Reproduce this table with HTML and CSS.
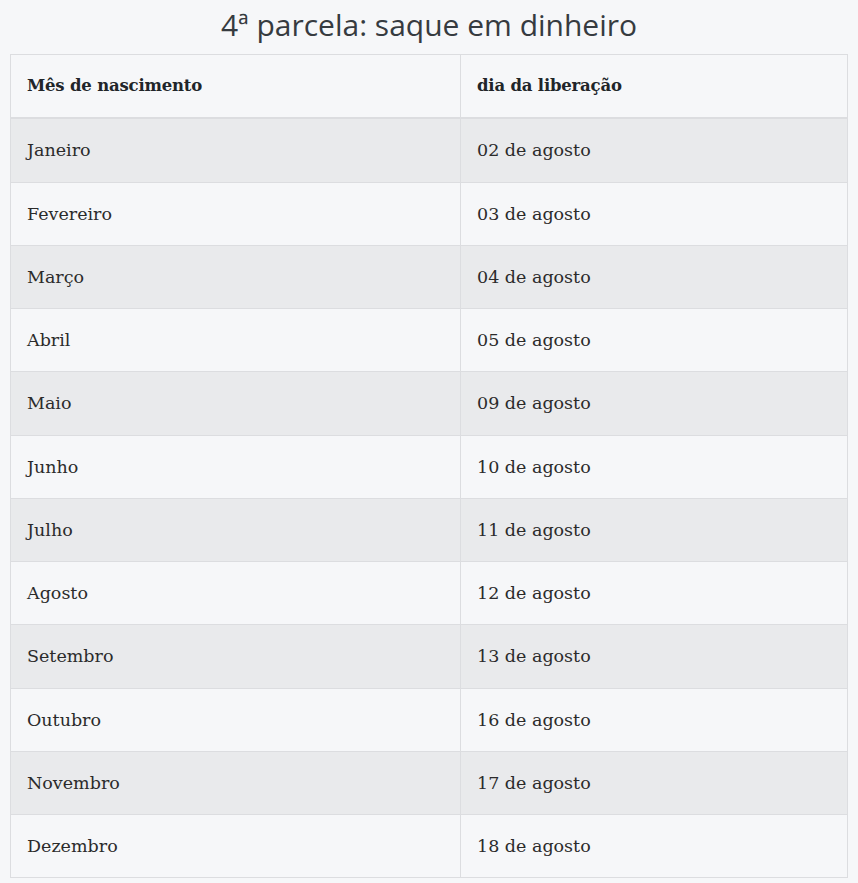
FILE: index.html
```html
<!DOCTYPE html>
<html lang="pt-BR">
<head>
<meta charset="utf-8">
<title>4ª parcela: saque em dinheiro</title>
<link rel="stylesheet" href="styles.css">
</head>
<body>
<div class="page">
  <h2 class="title">4ª parcela: saque em dinheiro</h2>
  <table class="schedule">
    <colgroup>
      <col class="col-month">
      <col class="col-date">
    </colgroup>
    <thead>
      <tr><th>Mês de nascimento</th><th>dia da liberação</th></tr>
    </thead>
    <tbody>
      <tr><td>Janeiro</td><td>02 de agosto</td></tr>
      <tr><td>Fevereiro</td><td>03 de agosto</td></tr>
      <tr><td>Março</td><td>04 de agosto</td></tr>
      <tr><td>Abril</td><td>05 de agosto</td></tr>
      <tr><td>Maio</td><td>09 de agosto</td></tr>
      <tr><td>Junho</td><td>10 de agosto</td></tr>
      <tr><td>Julho</td><td>11 de agosto</td></tr>
      <tr><td>Agosto</td><td>12 de agosto</td></tr>
      <tr><td>Setembro</td><td>13 de agosto</td></tr>
      <tr><td>Outubro</td><td>16 de agosto</td></tr>
      <tr><td>Novembro</td><td>17 de agosto</td></tr>
      <tr><td>Dezembro</td><td>18 de agosto</td></tr>
    </tbody>
  </table>
</div>
</body>
</html>
```

FILE: styles.css
```css
html, body {
  margin: 0;
  padding: 0;
  background: #f6f7f9;
}

.page {
  padding: 0 10px 0 10px;
}

.title {
  margin: 0;
  padding-top: 4px;
  height: 50px;
  font-family: "Open Sans", "Noto Sans", sans-serif;
  font-weight: 400;
  font-size: 30px;
  line-height: 42px;
  text-align: center;
  color: #363b40;
}

.schedule {
  width: 837px;
  table-layout: fixed;
  border-collapse: collapse;
  font-family: "DejaVu Serif", serif;
  font-size: 17.5px;
  color: #2b2b2b;
}

.col-month {
  width: 450px;
}

.col-date {
  width: 387px;
}

.schedule th,
.schedule td {
  border: 1px solid #dcdde0;
  padding: 16px 16px;
  line-height: 30.25px;
  text-align: left;
}

.schedule th {
  font-weight: 700;
  font-size: 16.5px;
  letter-spacing: -0.2px;
  color: #212529;
  border-bottom: 2px solid #dcdde0;
}

.schedule tbody tr:nth-child(odd) {
  background: #e9eaec;
}
```
